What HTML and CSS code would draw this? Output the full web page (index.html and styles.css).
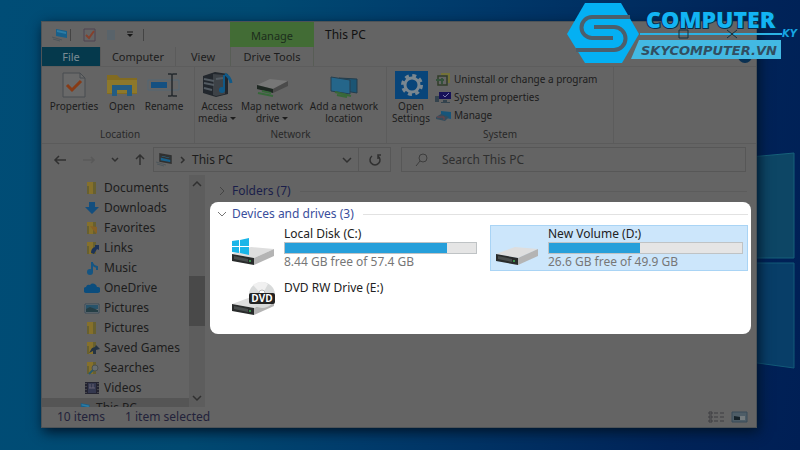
FILE: index.html
```html
<!DOCTYPE html>
<html lang="en">
<head>
<meta charset="utf-8">
<title>This PC</title>
<link rel="stylesheet" href="styles.css">
</head>
<body>
<svg class="wallpaper" viewBox="0 0 50 220" aria-hidden="true">
  <path d="M0 5L44 1V106H0z" fill="#0d4665" stroke="#17617a"/>
  <path d="M0 111H44V216L0 210z" fill="#083e68" stroke="#135a78"/>
</svg>

<svg width="0" height="0" class="defs" aria-hidden="true">
  <symbol id="folder" viewBox="0 0 16 16"><path d="M3 2h8v12H3z" fill="#85702b"/><path d="M3 6h2v8H3zM9 2h3v12H9z" fill="#68602f"/></symbol>
  <symbol id="pc" viewBox="0 0 20 16"><path d="M6 2l11 2v7L6 9z" fill="#17608b"/><path d="M7 3l9 2v2L7 5z" fill="#2d7ca4"/><path d="M2 10l10 3M3 12l7 2" stroke="#4d565b" stroke-width="1"/></symbol>
  <symbol id="drive" viewBox="0 0 44 24"><path d="M1 11L20 4l23 2-20 9z" fill="#dedede"/><path d="M23 15L43 6v7L23 22z" fill="#b4b4b4"/><path d="M1 11l22 4v7L1 18z" fill="#292b2b"/><path d="M3 13l14 3v3L3 16z" fill="#494d4d"/><circle cx="19" cy="18" r="1" fill="#3fb556"/></symbol>
</svg>

<main class="window">
  <header class="titlebar">
    <div class="quick">
      <svg width="20" height="16"><use href="#pc"/></svg>
      <i class="bar"></i>
      <svg width="14" height="14" viewBox="0 0 14 14" fill="none"><path d="M1 1h11v12H1z" stroke="#4f4350"/><path d="M3 7l3 3 5-7" stroke="#85402c" stroke-width="2"/></svg>
      <svg width="12" height="14" viewBox="0 0 12 14"><path d="M2 2h8v10H2z" fill="#59636a"/></svg>
      <svg width="10" height="8" viewBox="0 0 10 8"><path d="M2 1h6" stroke="#171717"/><path d="M2 3h6L5 6z" fill="#171717"/></svg>
      <i class="bar"></i>
    </div>
    <div class="context">Manage</div>
    <h1>This PC</h1>
  </header>

  <nav class="tabs">
    <button class="file">File</button>
    <button class="current">Computer</button>
    <button class="view">View</button>
    <button class="tools">Drive Tools</button>
  </nav>

  <section class="ribbon">
    <div class="group location">
      <div class="actions">
        <button class="wide"><svg width="28" height="28" viewBox="0 0 28 28" fill="none"><path d="M3 2h17l5 5v19H3z" fill="#696969" stroke="#484d50"/><path d="M20 2v5h5" stroke="#484d50"/><path d="M7 14l5 5 9-9" stroke="#873b16" stroke-width="3"/></svg>Properties</button>
        <button class="short"><svg width="32" height="28" viewBox="0 0 32 28"><path d="M1 4h10l3 3h17v16H1z" fill="#826b21"/><path d="M1 9h30v13H1z" fill="#8d782b"/><path d="M6 25V14h20v11h-5v-6H11v6z" fill="#245c82"/></svg>Open</button>
        <button class="mid"><svg width="36" height="28" viewBox="0 0 36 28" fill="none"><path d="M2 9h31v10H2z" stroke="#526775"/><path d="M5 11h16v6H5z" fill="#145081"/><path d="M26 4v20M22 3h3l1 1 1-1h4M22 25h3l1-1 1 1h4" stroke="#252a2e" stroke-width="1.5"/></svg>Rename</button>
      </div>
      <h2>Location</h2>
    </div>
    <div class="group network">
      <div class="actions">
        <button class="mid"><svg width="36" height="28" viewBox="0 0 36 28"><path d="M4 5l12-4 13 2v20l-12 3-13-4z" fill="#22272d"/><path d="M14 3l12 1v19l-9 2-3-1z" fill="#3d4247"/><path d="M5 8l10 2M5 12l10 2M5 17l8 2M17 8l7-1" stroke="#535b62" stroke-width="2"/><path d="M25 4v14" stroke="#105987" stroke-width="2"/><path d="M26 3q5 3 6 9" fill="none" stroke="#105987" stroke-width="3"/><circle cx="23" cy="19" r="3" fill="#105987"/></svg>Access<br>media <b class="down"></b></button>
        <button class="map"><svg width="34" height="28" viewBox="0 0 34 28"><path d="M2 14l13-6 18 2-15 8z" fill="#777"/><path d="M18 18l15-8v5l-15 7z" fill="#4b4b4b"/><path d="M2 14l16 4v4L2 18z" fill="#1e2822"/><path d="M3 22l15 3M7 20l9 2" stroke="#37683a" stroke-width="2"/></svg>Map network<br>drive <b class="down"></b></button>
        <button class="add"><svg width="32" height="28" viewBox="0 0 32 28"><path d="M11 7l18 1v14l-18-3z" fill="#1b5574" stroke="#233d4c"/><path d="M3 6l19 3v14L3 20z" fill="#25668a" stroke="#263f4e"/><path d="M7 21l16 4M9 24l10 2" stroke="#376838" stroke-width="2"/></svg>Add a network<br>location</button>
      </div>
      <h2>Network</h2>
    </div>
    <div class="group system">
      <div class="actions">
        <button class="settings"><svg width="33" height="28" viewBox="0 0 33 28"><path d="M0 0h33v28H0z" fill="#08457a"/><g transform="translate(17 14)" fill="none" stroke="#7a8790"><circle r="7" stroke-width="3"/><circle r="9.5" stroke-width="3" stroke-dasharray="4 3.46"/></g></svg>Open<br>Settings</button>
        <div class="links">
          <button><svg width="16" height="16" viewBox="0 0 16 16" fill="none"><path d="M3 5h9v9H3z" stroke="#313c28" stroke-width="1.5"/><path d="M6 3h8v9" stroke="#747238" stroke-width="2"/><path d="M1 9h8M7 7v6" stroke="#34523b" stroke-width="2"/></svg>Uninstall or change a program</button>
          <button><svg width="16" height="16" viewBox="0 0 16 16"><path d="M4 3h12v7H4z" fill="#171258"/><path d="M8 6l2 2 4-4" stroke="#7c7caa" fill="none"/><path d="M0 7h4v6H0zM8 11h4v2h3v1H6v-1h2z" fill="#34434d"/></svg>System properties</button>
          <button><svg width="16" height="16" viewBox="0 0 16 16"><path d="M6 4l10 1v7L6 10z" fill="#17557a"/><path d="M1 10l5-3 8 3-4 4-9-2z" fill="#344c5c"/><path d="M2 10h7v3" fill="none" stroke="#764142"/></svg>Manage</button>
        </div>
      </div>
      <h2>System</h2>
    </div>
  </section>

  <form class="address">
    <div class="history">
      <button type="button" aria-label="Back"><svg width="14" height="12" viewBox="0 0 14 12"><path d="M6 2L2 6l4 4M2 6h11"/></svg></button>
      <button type="button" aria-label="Forward" class="off"><svg width="14" height="12" viewBox="0 0 14 12"><path d="M1 6h11M9 3l3 3-3 3"/></svg></button>
      <button type="button" aria-label="Recent"><svg width="8" height="12" viewBox="0 0 8 12"><path d="M1 4l3 3 3-3"/></svg></button>
      <button type="button" aria-label="Up"><svg width="12" height="12" viewBox="0 0 12 12"><path d="M2 5l4-4 4 4M6 1v10"/></svg></button>
    </div>
    <div class="path">
      <svg width="20" height="16"><use href="#pc"/></svg>
      <svg width="8" height="12" viewBox="0 0 8 12"><path d="M2 3l3 3-3 3"/></svg>
      <span>This PC</span>
      <button type="button" aria-label="Locations"><svg width="12" height="12" viewBox="0 0 12 12"><path d="M2 4l4 4 4-4"/></svg></button>
      <button type="button" aria-label="Refresh" class="refresh"><svg width="14" height="14" viewBox="0 0 14 14"><path d="M4 3a5 5 0 1 0 6 0M10 6V2h3"/></svg></button>
    </div>
    <label class="search"><svg width="14" height="14" viewBox="0 0 14 14"><circle cx="8" cy="5" r="4"/><path d="M5 8l-4 5"/></svg><input type="search" placeholder="Search This PC" aria-label="Search This PC"></label>
  </form>

  <div class="content">
    <aside class="sidebar">
      <nav class="tree">
        <a href="#"><svg><use href="#folder"/></svg>Documents</a>
        <a href="#"><svg viewBox="0 0 16 16"><path d="M5 2h6v5h4l-7 7-7-7h4z" fill="#134e7e"/></svg>Downloads</a>
        <a href="#"><svg viewBox="0 0 16 16"><use href="#folder"/><path d="M6 6l7 1v7l-3-3z" fill="#876025"/></svg>Favorites</a>
        <a href="#"><svg viewBox="0 0 16 16"><use href="#folder"/><path d="M7 13q0-5 4-6V5h4v5l-2-1-3 5z" fill="#1c3358"/></svg>Links</a>
        <a href="#"><svg viewBox="0 0 16 16"><path d="M8 2v10M8 3q1 3 5 4v3" fill="none" stroke="#145583" stroke-width="2"/><circle cx="6" cy="12" r="3" fill="#145583"/></svg>Music</a>
        <a href="#"><svg viewBox="0 0 16 16"><path d="M3 13a3 3 0 0 1-1-6 3 3 0 0 1 4-2 4 4 0 0 1 7 2 3 3 0 0 1 1 6z" fill="#0b4d7d"/></svg>OneDrive</a>
        <a href="#"><svg viewBox="0 0 16 16"><path d="M1 4h14v9H1z" fill="#72787b" stroke="#394b58"/><path d="M2 5h12v4H2z" fill="#28536a"/><path d="M2 9l4-2 8 3v2H2z" fill="#253e45"/></svg>Pictures</a>
        <a href="#"><svg><use href="#folder"/></svg>Pictures</a>
        <a href="#"><svg viewBox="0 0 16 16"><use href="#folder"/><path d="M5 13l3-5 3-1 1-2 4 4-4 1v4h-3v-3z" fill="#253443"/></svg>Saved Games</a>
        <a href="#"><svg viewBox="0 0 16 16"><use href="#folder"/><circle cx="11" cy="8" r="3" fill="#686e70" stroke="#4a5050"/><path d="M9 10l-4 4" stroke="#28596c" stroke-width="2"/></svg>Searches</a>
        <a href="#"><svg viewBox="0 0 16 16"><path d="M1 2h14v12H1z" fill="#242431"/><path d="M4 3h8v10H4z" fill="#34384f"/><path d="M2 3v10M14 3v10" stroke="#666" stroke-dasharray="1 2"/><path d="M6 4v4M9 4v4M5 8h6" stroke="#656173"/></svg>Videos</a>
        <a href="#" class="root"><svg viewBox="0 0 20 16"><use href="#pc"/></svg>This PC</a>
      </nav>
      <div class="scroll"><svg width="12" height="12" viewBox="0 0 12 12"><path d="M2 8l4-4 4 4"/></svg><i></i><svg width="12" height="12" viewBox="0 0 12 12"><path d="M2 4l4 4 4-4"/></svg></div>
    </aside>
    <section class="pane">
      <h3 class="folders"><svg width="12" height="12" viewBox="0 0 12 12"><path d="M4 2l4 4-4 4"/></svg>Folders (7)</h3>
      <div class="panel">
        <h3><svg width="12" height="12" viewBox="0 0 12 12"><path d="M2 4l4 4 4-4"/></svg>Devices and drives (3)</h3>
        <div class="drives">
          <article>
            <svg width="46" height="44" viewBox="0 0 46 44"><use href="#drive" y="17" width="44" height="24"/><path d="M1 15l7-1v6H1zM9 14l9-2v8H9zM1 21h7v6l-7-1zM9 21h9v8l-9-2z" fill="#19b5e8"/></svg>
            <div class="info"><label for="c">Local Disk (C:)</label><progress id="c" max="100" value="85"></progress><p>8.44 GB free of 57.4 GB</p></div>
          </article>
          <article class="selected">
            <svg width="46" height="44" viewBox="0 0 46 44"><use href="#drive" y="17" width="44" height="24"/></svg>
            <div class="info"><label for="d">New Volume (D:)</label><progress id="d" max="100" value="47"></progress><p>26.6 GB free of 49.9 GB</p></div>
          </article>
          <article class="disc">
            <svg width="46" height="44" viewBox="0 0 46 44"><use href="#drive" y="13" width="44" height="24"/><circle cx="31" cy="15" r="13" fill="#d8dada"/><path d="M31 15L22 5q8-6 15-1z" fill="#f0f0f0"/><circle cx="31" cy="13" r="3" fill="#fff" stroke="#bbb"/><rect x="18" y="13" width="26" height="11" rx="2" fill="#222"/><text x="31" y="22" class="dvd">DVD</text></svg>
            <div class="info"><span>DVD RW Drive (E:)</span></div>
          </article>
        </div>
      </div>
    </section>
  </div>

  <footer class="status">
    <span>10 items</span><span>1 item selected</span>
    <div class="modes">
      <svg width="17" height="12" viewBox="0 0 17 12"><path d="M1 1h3v2H1zM1 5h3v2H1zM1 9h3v2H1zM6 2h4M12 2h4M6 6h4M12 6h4M6 10h4M12 10h4" fill="none" stroke="#3c3c41"/></svg>
      <svg width="17" height="12" viewBox="0 0 17 12"><path d="M1 1h15v10H1z" fill="#4e5d67" stroke="#384a59"/><path d="M3 5l6 1v3H3z" fill="#17232a"/><path d="M9 5h5v4H9z" fill="#747b7e"/></svg>
    </div>
  </footer>
</main>

<svg class="brand" width="238" height="68" viewBox="0 0 238 68">
  <circle cx="183" cy="56" r="7" fill="#093052"/>
  <path d="M5 34L23 3h36l18 31-17 29H23z" fill="#04b0f3"/>
  <path d="M68 17H30a10 10 0 0 0 0 21h21M32 27h20a11 11 0 0 1 0 23H14" fill="none" stroke="#4c5f6c" stroke-width="4"/>
  <path d="M78 34h142" stroke="#2bb2e4" stroke-width="2"/>
  <path d="M117 30h9v8h-9zM165 30l10 8M175 30l-10 8" fill="none" stroke="#12303f"/>
  <path d="M77 40h142v19H69z" fill="#43b9e3"/>
  <text x="84" y="28" class="name">COMPUTER</text>
  <text x="79" y="55" class="site">SKYCOMPUTER.VN</text>
  <text x="220" y="37" class="ky">KY</text>
</svg>
</body>
</html>
```
FILE: styles.css
```css
* { box-sizing: border-box; }
body {
  margin: 0;
  min-height: 100vh;
  display: flex;
  position: relative;
  padding: 21px 43px 22px 41px;
  background: linear-gradient(100deg, #004d76 0%, #004a72 30%, #003c6c 50%, #002459 85%, #001f55 100%);
  font: 11px/12px "Noto Sans", "Open Sans", sans-serif;
  color: #1c1c1c;
}
h1, h2, h3, p { margin: 0; font-weight: 400; }
button, input { font: inherit; color: inherit; background: none; border: 0; padding: 0; margin: 0; }
a { color: inherit; text-decoration: none; }
svg { flex: none; }
.defs { position: absolute; }
.wallpaper { position: absolute; right: 0; top: 152px; width: 50px; }
.brand { position: absolute; right: 0; top: 0; }

.window {
  position: relative;
  flex: 1;
  min-width: 0;
  display: flex;
  flex-direction: column;
  background: #646464;
  border: 1px solid #4d5357;
  box-shadow: 2px 4px 12px #001428;
}
.titlebar { display: flex; height: 25px; }
.quick { width: 188px; padding: 0 8px; display: flex; align-items: center; gap: 8px; }
.bar { width: 1px; height: 12px; background: #444; }
.quick .bar:first-of-type { margin-left: -8px; margin-right: 4px; }
.context { width: 84px; background: #426c35; text-align: center; line-height: 28px; color: #1c2c1c; }
h1 { font-size: 12px; line-height: 26px; padding-left: 11px; color: #111; }
.tabs { display: flex; height: 20px; border-bottom: 1px solid #5d5d5d; }
.tabs button { line-height: 20px; height: 19px; }
.tabs .file { width: 58px; background: #05394c; color: #7b8b93; }
.tabs .current { width: 76px; border: 1px solid #5b5b5b; border-width: 0 1px; }
.view { width: 54px; }
.tools { width: 84px; }
.tabs .tools { border: 1px solid #585d56; border-width: 0 1px; }

.ribbon { display: flex; height: 77px; border-bottom: 1px solid #5b5b5b; font-size: 10px; }
.group { display: flex; flex-direction: column; justify-content: space-between; border-right: 1px solid #5c5c5c; padding: 4px 0 3px; }
.location { width: 153px; padding-left: 4px; }
.network { width: 192px; }
.system { width: 227px; }
.group h2 { font-size: 10px; text-align: center; color: #292929; }
.actions { display: flex; align-items: flex-start; }
.actions button { white-space: nowrap; }
.actions > button { text-align: center; }
.actions > button > svg { display: block; margin: 0 auto 1px; }
.wide { width: 56px; }
.short { width: 40px; }
.mid { width: 44px; }
.map { width: 66px; }
.add { width: 78px; }
.settings { width: 48px; }
.down { display: inline-block; border: 3px solid transparent; border-top-color: #1c1c1c; border-bottom: 0; vertical-align: 2px; }
.links { display: flex; flex-direction: column; gap: 2px; }
.links button { display: flex; align-items: center; gap: 3px; height: 16px; }

.address { display: flex; height: 31px; padding: 3px 10px 3px 11px; font-size: 12px; }
.address svg, .scroll svg, h3 svg { fill: none; stroke: #303030; stroke-width: 1.5; }
.history { display: flex; align-items: center; gap: 15px; width: 100px; }
.history button { display: flex; }
.off { opacity: .2; }
.path { display: flex; align-items: center; gap: 5px; width: 238px; border: 1px solid #575757; }
.path span { flex: 1; }
.path button { display: flex; align-items: center; justify-content: center; height: 100%; }
.path .refresh { width: 32px; border-left: 1px solid #575757; }
.search { flex: 1; display: flex; align-items: center; margin-left: 10px; border: 1px solid #575757; padding-left: 13px; gap: 13px; }
.search svg { stroke: #3d3d3d; stroke-width: 1; }
.search input { flex: 1; min-width: 0; outline: 0; appearance: none; }
.search input::placeholder { color: #2f2f2f; opacity: 1; }

.content { flex: 1; min-height: 0; display: flex; font-size: 12px; }
.sidebar { width: 163px; display: flex; }
.tree { flex: 1; display: flex; flex-direction: column; height: 232px; padding-top: 3px; overflow: hidden; }
.tree a { display: flex; align-items: center; gap: 4px; height: 20px; flex: none; padding-left: 42px; white-space: nowrap; }
.tree svg { width: 16px; height: 16px; }
.tree .root { background: #555; padding-left: 34px; }
.scroll { width: 16px; background: #5d5d5d; display: flex; flex-direction: column; align-items: center; height: 232px; padding: 3px 0; }
.scroll i { width: 16px; height: 50px; background: #494949; margin: 86px 0 auto; }
.pane { flex: 1; padding: 10px 5px 0; }
h3 { display: flex; align-items: center; gap: 4px; font-size: 12px; line-height: 12px; color: #3a4e9c; }
h3::after { content: ""; flex: 1; height: 1px; margin-left: 5px; background: #e2e2e2; }
h3 svg { stroke: #777; stroke-width: 1; }
.folders { color: #1a1e4a; padding: 0 4px 0 6px; }
.folders::after { background: #5c5c5c; }
.folders svg { stroke: #444; }
.panel { margin-top: 5px; padding: 6px 3px 0 6px; min-height: 132px; border-radius: 8px; background: #fff; }
.drives { display: grid; grid-template-columns: 1fr 1fr; row-gap: 8px; column-gap: 8px; margin-top: 5px; padding-left: 8px; }
article { display: flex; height: 46px; }
.drives article { border: 1px solid transparent; padding: 0 4px 0 6px; }
.drives .selected { background: #cce6fb; border-color: #a9d4f5; padding-left: 4px; }
.info { flex: 1; padding: 1px 0 0 7px; color: #222; }
.info label, .info span { display: block; line-height: 14px; }
.info p { line-height: 14px; color: #777; font-size: 12px; }
progress { appearance: none; display: block; width: 100%; height: 12px; margin: 1px 0; border: 1px solid #bfc3c5; background: #e5e5e5; }
progress::-webkit-progress-bar { background: #e5e5e5; }
progress::-webkit-progress-value { background: #269fda; }
.dvd { font: 700 10px "Open Sans", sans-serif; fill: #fff; text-anchor: middle; }

.status { display: flex; align-items: center; height: 20px; padding: 0 8px 0 15px; gap: 20px; color: #22223a; font-size: 12px; }
.modes { margin-left: auto; display: flex; gap: 6px; }
.name { font: 800 23px "Open Sans", sans-serif; fill: #12b4f4; stroke: #062c4c; stroke-width: 2px; paint-order: stroke; }
.site { font: italic 700 13px "DejaVu Sans", sans-serif; fill: #314e61; }
.ky { font: italic 700 10px "DejaVu Sans", sans-serif; fill: #16a6e2; }
```
